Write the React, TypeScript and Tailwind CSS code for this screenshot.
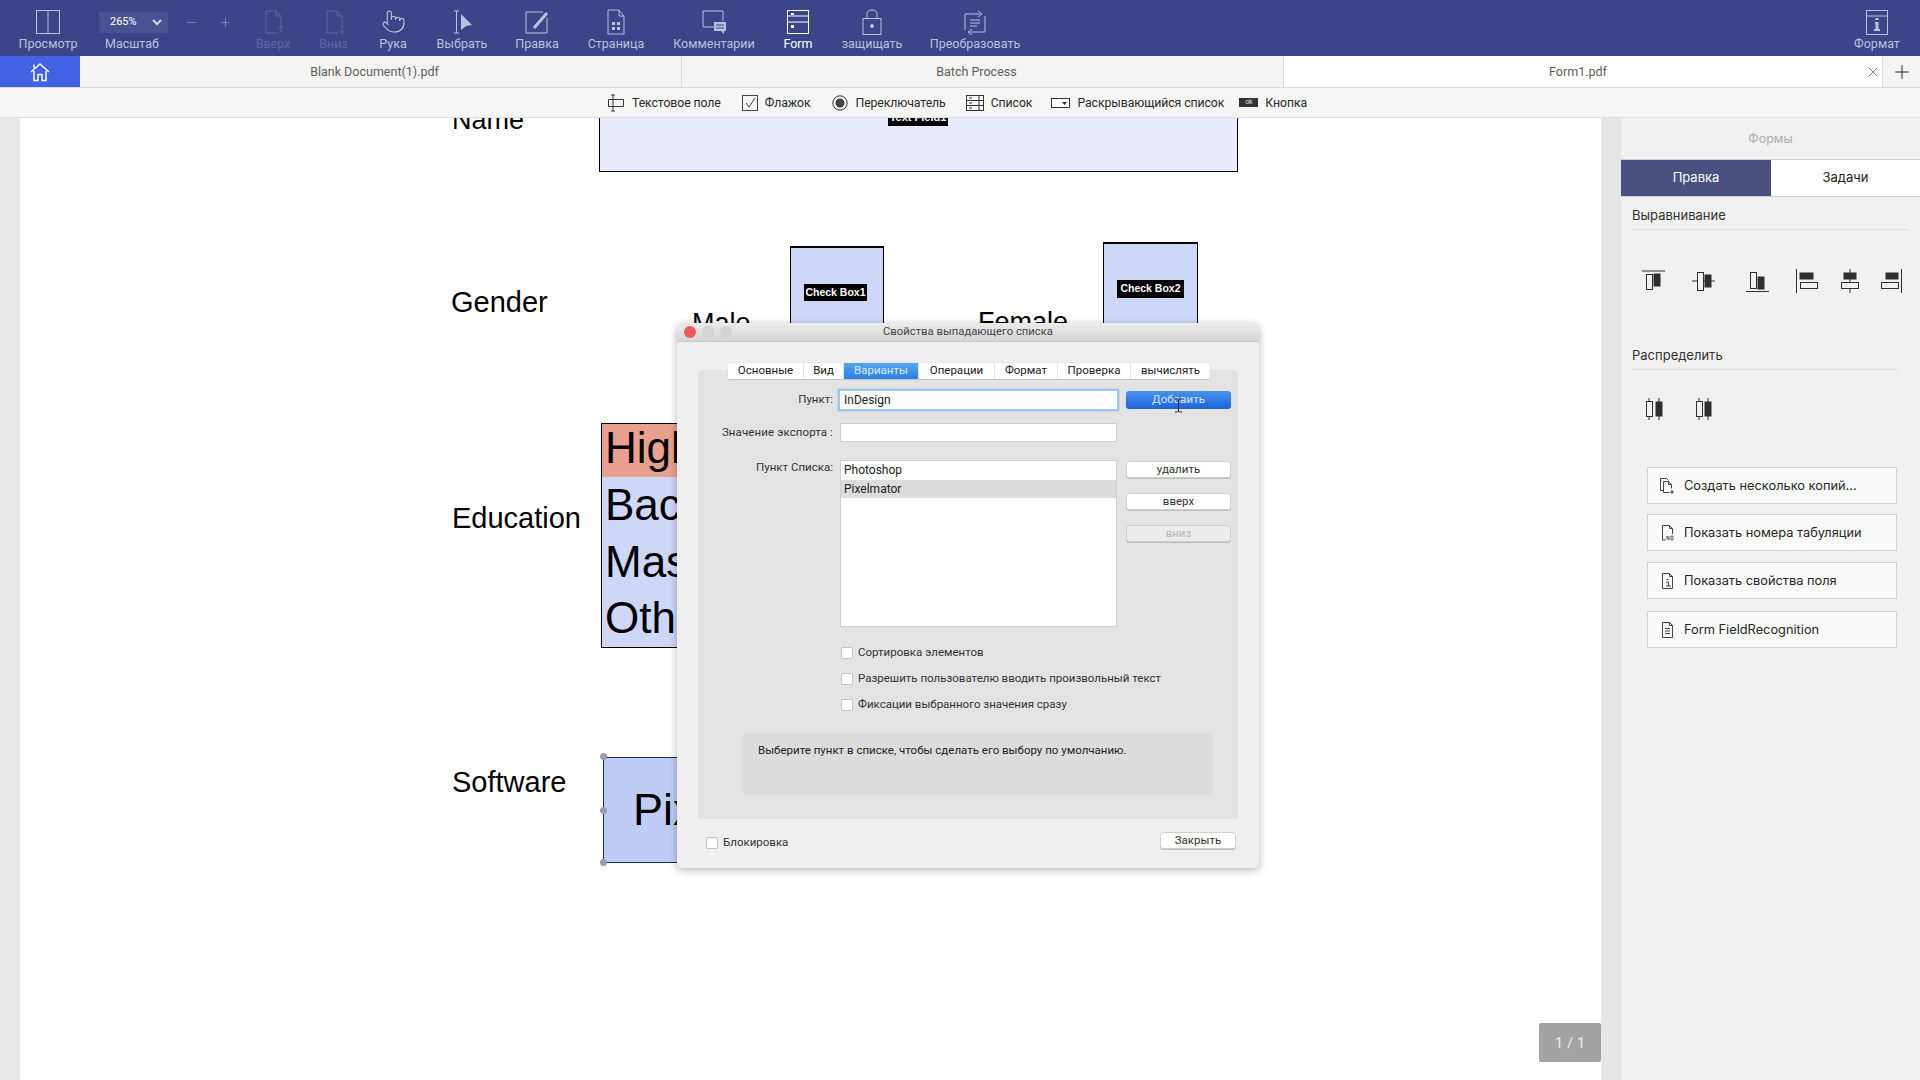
import React from "react";
import { Pointer, Plus, X, Minus } from "lucide-react";

const S = { fill: "none", stroke: "currentColor", strokeWidth: 1 } as const;

function Ico({ w = 28, h = 26, children }: { w?: number; h?: number; children: React.ReactNode }) {
  return (
    <svg width={w} height={h} viewBox={`0 0 ${w} ${h}`} {...S}>
      {children}
    </svg>
  );
}

function Tool({ w, label, tone = "normal", children }: { w: string; label: string; tone?: "normal" | "dim" | "active"; children: React.ReactNode }) {
  const col = tone === "active" ? "text-white" : tone === "dim" ? "text-[#5d669c]" : "text-[#bcc1de]";
  return (
    <div className={`${w} ${col} flex shrink-0 flex-col items-center pt-[8px]`}>
      <div className="flex h-[27px] items-center justify-center">{children}</div>
      <div className="mt-[1px] whitespace-nowrap text-[12.500px] leading-[16px]">{label}</div>
    </div>
  );
}

function TopBar() {
  return (
    <div className="flex h-[56px] shrink-0 bg-[#3b4588]">
      <Tool w="w-[96px]" label="Просмотр">
        <Ico>
          <rect x="2.5" y="1.5" width="23" height="23" />
          <path d="M14 1.5v23" />
        </Ico>
      </Tool>
      <div className="flex w-[72px] shrink-0 flex-col items-center pt-[12px] text-[#bcc1de]">
        <div className="ml-[3px] flex h-[21px] w-[69px] items-center justify-between bg-[#4a5391] pl-[11px] pr-[6px] text-[11px] text-white">
          <span>265%</span>
          <svg width="10" height="7" viewBox="0 0 10 7" fill="none" stroke="#d5d8ec" strokeWidth="2">
            <path d="M1 1l4 4 4-4" />
          </svg>
        </div>
        <div className="mt-[3px] whitespace-nowrap text-[12.500px] leading-[16px]">Масштаб</div>
      </div>
      <div className="flex w-[75px] shrink-0 items-start pl-[17px] pt-[16px] text-[#b3b8d8]">
        <Minus size={13} strokeWidth={1} />
        <Plus size={13} strokeWidth={1} className="ml-[21px]" />
      </div>
      <Tool w="w-[60px]" label="Вверх" tone="dim">
        <Ico>
          <path d="M7 24V2h10l5 5v11M17 2v5h5M7 24h11" />
          <path d="M22 24v-7M19.5 19.5l2.5-3 2.5 3" />
        </Ico>
      </Tool>
      <Tool w="w-[61px]" label="Вниз" tone="dim">
        <Ico>
          <path d="M7 24V2h10l5 5v11M17 2v5h5M7 24h11" />
          <path d="M22 17v7M19.5 21.5l2.5 3 2.5-3" />
        </Ico>
      </Tool>
      <Tool w="w-[58px]" label="Рука">
        <Pointer size={25} strokeWidth={1} />
      </Tool>
      <Tool w="w-[80px]" label="Выбрать">
        <Ico>
          <path d="M6 2h5M6 24h5M8.5 2v22" />
          <path d="M13 5l11 11-6 1-5 4z" fill="currentColor" stroke="none" />
        </Ico>
      </Tool>
      <Tool w="w-[70px]" label="Правка">
        <Ico>
          <path d="M24 9v15H3V3h17" />
          <path d="M11 19L24 4" strokeWidth="3" />
        </Ico>
      </Tool>
      <Tool w="w-[88px]" label="Страница">
        <Ico>
          <path d="M6 25V1h11l5 6v18zM17 1v6h5" />
          <path d="M10 13h3v3h-3zM15 13h3v3h-3zM10 18h3v3h-3zM15 18h3v3h-3z" fill="currentColor" stroke="none" />
        </Ico>
      </Tool>
      <Tool w="w-[108px]" label="Комментарии">
        <Ico>
          <path d="M18 18H3V2h20v10" />
          <path d="M14 13h12v9h-2v3l-3-3h-7z" fill="currentColor" stroke="none" />
          <path d="M16 16h8M16 19h8" stroke="#3b4588" />
        </Ico>
      </Tool>
      <Tool w="w-[60px]" label="Form" tone="active">
        <Ico w={24}>
          <rect x="1.5" y="1.5" width="21" height="23" />
          <path d="M1.5 13h21M1.5 7h21" />
          <path d="M5 4h3v2H5zM5 16h3v3H5z" fill="currentColor" stroke="none" />
        </Ico>
      </Tool>
      <Tool w="w-[88px]" label="защищать">
        <Ico w={22}>
          <rect x="2" y="9.5" width="18" height="16" />
          <path d="M6 9V5q0-4 5-4t5 4v4" />
          <circle cx="11" cy="17" r="1.5" fill="currentColor" />
        </Ico>
      </Tool>
      <Tool w="w-[118px]" label="Преобразовать">
        <Ico>
          <path d="M4 21V5h15M17 2l4 3-4 3M24 7v16H9M11 20l-4 3 4 3" />
          <path d="M9 11h10M9 14h10M9 17h7" />
        </Ico>
      </Tool>
      <div className="flex-1" />
      <Tool w="w-[86px]" label="Формат">
        <Ico w={24}>
          <rect x="1.5" y="1.5" width="21" height="24" />
          <path d="M1.5 7h21" />
          <path d="M10.5 9h3v2h-3zM10 13h3.5v7h1.5v2H9v-2h1.5v-5H10z" fill="currentColor" stroke="none" />
        </Ico>
      </Tool>
    </div>
  );
}

function TabBar() {
  return (
    <div className="flex h-[32px] shrink-0 border-b border-[#dcdcdc] bg-[#f4f4f4] text-[12.500px] text-[#5e5e5e]">
      <div className="flex w-[80px] items-center justify-center bg-[#4162e4] text-white">
        <svg width="20" height="20" viewBox="0 0 20 20" fill="none" stroke="currentColor" strokeWidth="1.5">
          <path d="M1 10l9-8 9 8" />
          <path d="M4 9v9.5h4v-6h4v6h4V9" />
          <path d="M4 6V2.5" />
        </svg>
      </div>
      <div className="flex w-[602px] items-center justify-center border-r border-[#dcdcdc] pr-[12px] pt-[1px]">Blank Document(1).pdf</div>
      <div className="flex w-[602px] items-center justify-center border-r border-[#dcdcdc] pr-[12px] pt-[1px]">Batch Process</div>
      <div className="relative flex w-[598px] items-center justify-center bg-white pr-[10px] pt-[1px]">
        Form1.pdf
        <X size={16} strokeWidth={1} className="absolute right-[1px] top-[8px] text-[#444]" />
      </div>
      <div className="flex flex-1 items-center justify-center border-l border-[#dcdcdc] text-[#111]">
        <Plus size={22} strokeWidth={1} />
      </div>
    </div>
  );
}

function FormItem({ label, ml, children }: { label: string; ml: string; children: React.ReactNode }) {
  return (
    <div className={`${ml} flex items-center whitespace-nowrap`}>
      {children}
      <span className="ml-[7px] pt-[1px]">{label}</span>
    </div>
  );
}

function FormBar() {
  return (
    <div className="flex h-[30px] shrink-0 items-center border-b border-[#dedede] bg-[#f6f6f6] pl-[607px] text-[12.300px] tracking-[-0.1px] text-[#2a2a2a]">
      <FormItem label="Текстовое поле" ml="">
        <svg width="18" height="18" viewBox="0 0 18 18" fill="none" stroke="#333" strokeWidth="1">
          <path d="M1.5 5.5h15v7h-15zM6 1v16M4 1h4M4 17h4" />
        </svg>
      </FormItem>
      <FormItem label="Флажок" ml="ml-[21px]">
        <svg width="16" height="16" viewBox="0 0 16 16" fill="none" stroke="#444" strokeWidth="1">
          <rect x="0.5" y="0.5" width="15" height="15" />
          <path d="M4 8l3 4 6-9" />
        </svg>
      </FormItem>
      <FormItem label="Переключатель" ml="ml-[22px]">
        <svg width="16" height="16" viewBox="0 0 16 16">
          <circle cx="8" cy="8" r="7.2" fill="none" stroke="#333" />
          <circle cx="8" cy="8" r="4.5" fill="#444" />
        </svg>
      </FormItem>
      <FormItem label="Список" ml="ml-[20px]">
        <svg width="18" height="16" viewBox="0 0 18 16" fill="none" stroke="#333" strokeWidth="1">
          <rect x="0.5" y="0.5" width="17" height="15" />
          <path d="M0.5 5.5h17M0.5 10.5h17M13 0.5v15" />
          <path d="M3 3h3M3 8h3M3 13h3" />
        </svg>
      </FormItem>
      <FormItem label="Раскрывающийся список" ml="ml-[19px]">
        <svg width="19" height="10" viewBox="0 0 19 10">
          <rect x="0.5" y="0.5" width="18" height="9" fill="#fff" stroke="#333" />
          <path d="M11 4h5l-2.500 3z" fill="#333" />
        </svg>
      </FormItem>
      <FormItem label="Кнопка" ml="ml-[15px]">
        <div className="flex h-[9px] w-[19px] items-center justify-center bg-[#333] text-[7px] leading-none text-[#ddd]">ok</div>
      </FormItem>
    </div>
  );
}

const docText = "[font-family:'Liberation_Sans',Arial,sans-serif] text-black";

function PageCanvas() {
  return (
    <div className={`relative min-w-0 flex-1 overflow-hidden bg-white ${docText}`}>
      <div className="absolute left-[432px] top-[-15px] text-[27px] leading-[34px]">Name</div>
      <div className="absolute left-[579px] top-[-39px] h-[93px] w-[639px] border-[1.5px] border-black bg-[#e9ecfc]" />
      <div className="absolute left-[868px] top-[-10px] flex h-[18px] w-[60px] items-center justify-center bg-black text-[11px] font-bold text-white">Text Field1</div>

      <div className="absolute left-[431px] top-[167px] text-[29px] leading-[34px]">Gender</div>
      <div className="absolute left-[672px] top-[188px] text-[27px] leading-[34px]">Male</div>
      <div className="absolute left-[958px] top-[187px] text-[27px] leading-[34px]">Female</div>
      <div className="absolute left-[770px] top-[128px] h-[100px] w-[94px] border-x border-t-2 border-black bg-[#ced7f7]" />
      <div className="absolute left-[1083px] top-[124px] h-[100px] w-[95px] border-x border-t-2 border-black bg-[#ced7f7]" />
      <div className="absolute left-[784px] top-[166px] flex h-[17px] w-[63px] items-center justify-center bg-black text-[10.500px] font-bold text-white">Check Box1</div>
      <div className="absolute left-[1097px] top-[162px] flex h-[18px] w-[67px] items-center justify-center bg-black text-[10.500px] font-bold text-white">Check Box2</div>

      <div className="absolute left-[432px] top-[383px] text-[29px] leading-[34px]">Education</div>
      <div className="absolute left-[581px] top-[305px] h-[225px] w-[200px] overflow-hidden whitespace-nowrap border border-black bg-[#cfd7f8] text-[44px] leading-[56.500px]">
        <div className="h-[53px] bg-[#e9a18f] pl-[3px] leading-[48px]">High School</div>
        <div className="pl-[3px]">Bachelor</div>
        <div className="pl-[3px]">Masters</div>
        <div className="pl-[3px]">Other</div>
      </div>

      <div className="absolute left-[432px] top-[647px] text-[29px] leading-[34px]">Software</div>
      <div className="absolute left-[583px] top-[639px] flex h-[106px] w-[200px] items-center overflow-hidden whitespace-nowrap border border-[#1d2a5c] bg-[#bfccf5] pl-[29px] text-[45px]">Pixelmator</div>
      <div className="absolute left-[580px] top-[635px] h-[7px] w-[7px] rounded-full bg-[#9a9db0]" />
      <div className="absolute left-[580px] top-[689px] h-[7px] w-[7px] rounded-full bg-[#9a9db0]" />
      <div className="absolute left-[580px] top-[741px] h-[7px] w-[7px] rounded-full bg-[#9a9db0]" />

      <div className="absolute bottom-[18px] right-0 flex h-[39px] w-[62px] items-center justify-center rounded-[2px] bg-[#a3a3a3] pt-[1px] text-[15px] text-[#eeeeee] [font-family:Roboto,sans-serif]">1 / 1</div>
    </div>
  );
}

function AlignIcon({ kind }: { kind: number }) {
  const ink = "#2f2f2f";
  const shapes: Record<number, React.ReactNode> = {
    0: (<><path d="M1 2h23" /><rect x="5.500" y="5.500" width="6" height="15" /><rect x="13" y="5" width="6" height="12" fill={ink} /></>),
    1: (<><path d="M1 12h23" /><rect x="6.500" y="3.500" width="6" height="18" fill="#f1f1f1" /><rect x="14" y="6" width="6" height="12" fill={ink} /></>),
    2: (<><path d="M1 22.500h23" /><rect x="5.500" y="3.500" width="6" height="16" /><rect x="13" y="8" width="6" height="12" fill={ink} /></>),
    3: (<><path d="M2.500 0v24" /><rect x="6" y="4" width="13" height="6" fill={ink} /><rect x="6.500" y="13.500" width="17" height="6" /></>),
    4: (<><path d="M12 0v24" /><rect x="6" y="4" width="12" height="6" fill={ink} /><rect x="3.500" y="13.500" width="17" height="6" fill="#f1f1f1" /></>),
    5: (<><path d="M21.500 0v24" /><rect x="6" y="4" width="12" height="6" fill={ink} /><rect x="1.500" y="13.500" width="17" height="6" /></>),
    6: (<><path d="M8 1v22M18 1v22" /><rect x="5.500" y="4.500" width="6" height="15" fill="#f1f1f1" /><rect x="15" y="5" width="6" height="14" fill={ink} /></>),
    7: (<><path d="M8 1v22M17 1v22" /><rect x="5.500" y="4.500" width="6" height="15" fill="#f1f1f1" /><rect x="14" y="5" width="6" height="14" fill={ink} /></>),
  };
  return (
    <svg width="24" height="24" viewBox="0 0 24 24" fill="none" stroke={ink} strokeWidth="1" className="shrink-0">
      {shapes[kind]}
    </svg>
  );
}

function SideBtn({ mt, label, children }: { mt: string; label: string; children: React.ReactNode }) {
  return (
    <div className={`${mt} flex h-[37px] items-center border border-[#d2d2d2] bg-[#fafafa] pl-[11px] text-[12.800px] text-[#262626]`}>
      <div className="flex w-[16px] justify-center text-[#444]">{children}</div>
      <span className="ml-[9px]">{label}</span>
    </div>
  );
}

function SidePanel() {
  return (
    <div className="flex w-[299px] shrink-0 flex-col bg-[#f1f1f1] text-[13px] [font-family:Inter,sans-serif]">
      <div className="flex h-[41px] shrink-0 items-center justify-center pt-[1px] text-[12.500px] text-[#aeaeae]">Формы</div>
      <div className="flex h-[38px] shrink-0 border-y border-[#cfcfcf] text-[13px]">
        <div className="flex w-[150px] items-center justify-center bg-[#4a5180] text-white">Правка</div>
        <div className="flex flex-1 items-center justify-center bg-white text-[#222]">Задачи</div>
      </div>
      <div className="mx-[11px] mt-[9px] border-b border-[#dedede] pb-[5px] leading-[18px] text-[#333]">Выравнивание</div>
      <div className="mt-[39px] flex pl-[20px]">
        <AlignIcon kind={0} />
        <div className="ml-[26px]"><AlignIcon kind={1} /></div>
        <div className="ml-[30px]"><AlignIcon kind={2} /></div>
        <div className="ml-[25px]"><AlignIcon kind={3} /></div>
        <div className="ml-[20px]"><AlignIcon kind={4} /></div>
        <div className="ml-[18px]"><AlignIcon kind={5} /></div>
      </div>
      <div className="mx-[11px] mt-[53px] mr-[22px] border-b border-[#dedede] pb-[5px] leading-[18px] text-[#333]">Распределить</div>
      <div className="mt-[27px] flex pl-[20px]">
        <AlignIcon kind={6} />
        <div className="ml-[26px]"><AlignIcon kind={7} /></div>
      </div>
      <div className="ml-[26px] mr-[23px] mt-[46px]">
        <SideBtn mt="" label="Создать несколько копий...">
          <svg width="15" height="16" viewBox="0 0 15 16" fill="none" stroke="currentColor"><path d="M3.500 12.500h-3v-12h6l2 2M3.500 3.500h5l3 3v4M3.500 3.500v11h6M8.500 3.500v3h3M12 12v4M10 14h4" /></svg>
        </SideBtn>
        <SideBtn mt="mt-[10px]" label="Показать номера табуляции">
          <svg width="15" height="16" viewBox="0 0 15 16" fill="none" stroke="currentColor"><path d="M2.500 15V.5h7l3 3V9M9.500.5v3h3M2.500 15h3" /><path d="M7 15v-4l2 4v-4M11 11h2v4h-2z" strokeWidth="0.800" /></svg>
        </SideBtn>
        <SideBtn mt="mt-[11px]" label="Показать свойства поля">
          <svg width="15" height="16" viewBox="0 0 15 16" fill="none" stroke="currentColor"><path d="M2.500 15.500V.5h7l3 3v12zM9.500.5v3h3" /><path d="M6.500 6.500h2M6 9h2.500v4M6 13h5" /></svg>
        </SideBtn>
        <SideBtn mt="mt-[12px]" label="Form FieldRecognition">
          <svg width="15" height="16" viewBox="0 0 15 16" fill="none" stroke="currentColor"><path d="M2.500 15.500V.5h7l3 3v12zM9.500.5v3h3M5 6.500h5M5 9h5M5 11.500h5" /></svg>
        </SideBtn>
      </div>
    </div>
  );
}

function DlgTab({ w, label, active }: { w: string; label: string; active?: boolean }) {
  return (
    <div className={`${w} flex items-center justify-center border-r border-[#e6e6e6] last:border-r-0 ${active ? "bg-gradient-to-b from-[#56a5f3] to-[#2a7fe6] text-[#d8ecff]" : "bg-white text-[#222]"}`}>
      {label}
    </div>
  );
}

function MacBtn({ label, mt = "", disabled }: { label: string; mt?: string; disabled?: boolean }) {
  return (
    <div className={`${mt} flex h-[17px] w-[105px] items-center justify-center rounded-[3px] border border-[#cfcfcf] shadow-[0_1px_0_#bdbdbd] ${disabled ? "bg-[#ececec] text-[#b5b5b5]" : "bg-white text-[#333]"}`}>
      {label}
    </div>
  );
}

function Check({ label, mt = "" }: { label: string; mt?: string }) {
  return (
    <div className={`${mt} flex h-[16px] items-center`}>
      <div className="h-[12px] w-[12px] rounded-[2px] border border-[#c4c4c4] bg-white" />
      <span className="ml-[5px] text-[#333]">{label}</span>
    </div>
  );
}

function Dialog() {
  return (
    <div className="absolute left-[677px] top-[323px] z-10 flex h-[545px] w-[582px] flex-col rounded-[5px] bg-[#efefef] text-[11.500px] shadow-[0_2px_9px_rgba(0,0,0,0.3)] [font-family:Roboto,sans-serif]">
      <div className="relative flex h-[19px] shrink-0 items-center justify-center rounded-t-[5px] border-b border-[#c9c9c9] bg-gradient-to-b from-[#ebebeb] to-[#d6d6d6] text-[11.300px] text-[#444]">
        <div className="absolute left-[7px] top-[3px] flex gap-[6px]">
          <div className="h-[12px] w-[12px] rounded-full bg-[#f25a5a]" />
          <div className="h-[12px] w-[12px] rounded-full bg-[#d4d4d4]" />
          <div className="h-[12px] w-[12px] rounded-full bg-[#d4d4d4]" />
        </div>
        <span>Свойства выпадающего списка</span>
      </div>

      <div className="relative z-10 ml-[51px] mt-[21px] flex h-[17px] w-[482px] shrink-0 overflow-hidden rounded-[3px] border-b border-[#c6c6c6] bg-white shadow-[0_0_1px_#aaa]">
        <DlgTab w="w-[76px]" label="Основные" />
        <DlgTab w="w-[40px]" label="Вид" />
        <DlgTab w="w-[75px]" label="Варианты" active />
        <DlgTab w="w-[76px]" label="Операции" />
        <DlgTab w="w-[63px]" label="Формат" />
        <DlgTab w="w-[73px]" label="Проверка" />
        <DlgTab w="w-[79px]" label="вычислять" />
      </div>

      <div className="mx-[21px] -mt-[10px] h-[449px] shrink-0 rounded-[3px] bg-[#e3e3e3] pt-[21px]">
        <div className="flex h-[18px] items-center">
          <div className="mr-[7px] w-[135px] text-right text-[#333]">Пункт:</div>
          <div className="relative flex h-[18px] w-[277px] items-center bg-white pl-[4px] text-[12px] text-[#222] shadow-[0_0_0_2.500px_#a3c4e8]">InDesign</div>
          <div className="relative ml-[9px] flex h-[18px] w-[105px] items-center justify-center rounded-[3px] bg-gradient-to-b from-[#4b93ee] to-[#1c63dc] text-[#cfe3ff]">
            Добавить
            <svg width="9" height="15" viewBox="0 0 9 15" fill="none" stroke="#222" strokeWidth="1" className="absolute left-[48px] top-[7px]">
              <path d="M1 1h2.500L4.500 2l1-1H8M4.500 2v11M1 14h2.500l1-1 1 1H8" />
            </svg>
          </div>
        </div>
        <div className="mt-[14px] flex h-[19px] items-center">
          <div className="mr-[7px] w-[135px] text-right tracking-[0.1px] text-[#333]">Значение экспорта :</div>
          <div className="h-[19px] w-[277px] border border-[#cdcdcd] bg-white" />
        </div>
        <div className="mt-[18px] flex">
          <div className="mr-[7px] w-[135px] pt-[1px] text-right leading-[13px] text-[#333]">Пункт Списка:</div>
          <div className="h-[167px] w-[277px] border border-[#cdcdcd] bg-white text-[12px] text-[#222]">
            <div className="flex h-[19px] items-center pb-[2px] pl-[3px]">Photoshop</div>
            <div className="flex h-[18px] items-center bg-[#dcdcdc] pb-[1px] pl-[3px]">Pixelmator</div>
          </div>
          <div className="ml-[9px] pt-[1px]">
            <MacBtn label="удалить" />
            <MacBtn label="вверх" mt="mt-[15px]" />
            <MacBtn label="вниз" mt="mt-[15px]" disabled />
          </div>
        </div>
        <div className="ml-[143px] mt-[18px]">
          <Check label="Сортировка элементов" />
          <Check label="Разрешить пользователю вводить произвольный текст" mt="mt-[10px]" />
          <Check label="Фиксации выбранного значения сразу" mt="mt-[10px]" />
        </div>
        <div className="ml-[45px] mt-[20px] h-[62px] w-[470px] rounded-[3px] bg-[#dcdcdc] pl-[15px] pt-[9px] leading-[16px] text-[#222]">
          Выберите пункт в списке, чтобы сделать его выбору по умолчанию.
        </div>
      </div>

      <div className="mt-[13px] flex items-start justify-between pl-[29px] pr-[23px]">
        <div className="mt-[3px]"><Check label="Блокировка" /></div>
        <div className="flex h-[17px] w-[76px] items-center justify-center rounded-[3px] border border-[#cfcfcf] bg-white text-[#333] shadow-[0_1px_0_#bdbdbd]">Закрыть</div>
      </div>
    </div>
  );
}

export default function App() {
  return (
    <div className="relative flex h-[1080px] w-[1920px] flex-col overflow-hidden bg-white [font-family:Roboto,sans-serif]">
      <TopBar />
      <TabBar />
      <FormBar />
      <div className="flex min-h-0 flex-1">
        <div className="w-[20px] shrink-0 bg-[#e8e8e8]" />
        <PageCanvas />
        <div className="w-[20px] shrink-0 bg-[#e6e6e6]" />
        <SidePanel />
      </div>
      <Dialog />
    </div>
  );
}
